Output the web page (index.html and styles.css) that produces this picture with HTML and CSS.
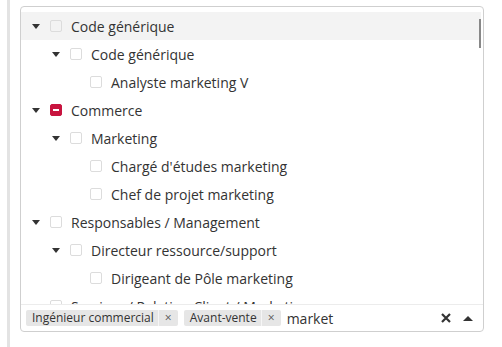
FILE: index.html
```html
<!DOCTYPE html>
<html lang="fr">
<head>
  <meta charset="UTF-8">
  <meta name="viewport" content="width=device-width, initial-scale=1">
  <title>Métiers</title>
  <link rel="stylesheet" href="styles.css">
</head>
<body>
  <div class="page">
    <div class="select">
      <div class="tree">
        <div class="row level-0 active"><span class="caret"></span><span class="box"></span><span class="label">Code générique</span></div>
        <div class="row level-1"><span class="caret"></span><span class="box"></span><span class="label">Code générique</span></div>
        <div class="row level-2"><span class="caret leaf"></span><span class="box"></span><span class="label">Analyste marketing V</span></div>
        <div class="row level-0"><span class="caret"></span><span class="box partial"></span><span class="label">Commerce</span></div>
        <div class="row level-1"><span class="caret"></span><span class="box"></span><span class="label">Marketing</span></div>
        <div class="row level-2"><span class="caret leaf"></span><span class="box"></span><span class="label">Chargé d'études marketing</span></div>
        <div class="row level-2"><span class="caret leaf"></span><span class="box"></span><span class="label">Chef de projet marketing</span></div>
        <div class="row level-0"><span class="caret"></span><span class="box"></span><span class="label">Responsables / Management</span></div>
        <div class="row level-1"><span class="caret"></span><span class="box"></span><span class="label">Directeur ressource/support</span></div>
        <div class="row level-2"><span class="caret leaf"></span><span class="box"></span><span class="label">Dirigeant de Pôle marketing</span></div>
        <div class="row level-0"><span class="caret"></span><span class="box"></span><span class="label">Services / Relation Client / Marketing</span></div>
        <div class="scroll-thumb"></div>
      </div>

      <div class="choices">
        <span class="tag"><span class="tag-text">Ingénieur commercial</span><span class="tag-x">×</span></span>
        <span class="tag"><span class="tag-text">Avant-vente</span><span class="tag-x">×</span></span>
        <input class="search" type="text" value="market">
        <span class="clear">
          <svg width="10" height="10" viewBox="0 0 10 10"><path d="M1 1 L9 9 M9 1 L1 9" stroke="#333" stroke-width="2.2"/></svg>
        </span>
        <span class="arrow-up"></span>
      </div>
    </div>
  </div>
</body>
</html>
```

FILE: styles.css
```css
* { box-sizing: border-box; }
body {
  margin: 0;
  font-family: "Open Sans", Arial, sans-serif;
  color: #333;
  background: white;
}
.page {
  margin-left: 7px;
  border-left: 3px solid #e3e3e3;
  padding: 6px 0 0 10px;
  height: 100vh;
}
.select {
  width: 464px;
  border: 1px solid #cfcfcf;
  border-radius: 4px;
  background: white;
}
.tree {
  position: relative;
  height: 297px;
  padding: 5px 2px 0 0;
  overflow: hidden;
}
.row {
  display: flex;
  align-items: center;
  height: 28px;
  font-size: 14px;
  white-space: nowrap;
}
.row.active { background: #f3f3f3; }
.level-0 { padding-left: 11px; }
.level-1 { padding-left: 31px; }
.level-2 { padding-left: 51px; }
.caret {
  width: 0;
  height: 0;
  border-left: 4px solid transparent;
  border-right: 4px solid transparent;
  border-top: 5px solid #333;
  margin-right: 10px;
}
.caret.leaf { visibility: hidden; }
.box {
  width: 12px;
  height: 12px;
  border: 1px solid #dcdcdc;
  border-radius: 2px;
  margin-right: 9px;
  flex-shrink: 0;
}
.box.partial {
  position: relative;
  background: #c8143f;
  border-color: #c8143f;
}
.box.partial::after {
  content: "";
  position: absolute;
  left: 2px;
  top: 4px;
  width: 6px;
  height: 2px;
  background: white;
}
.scroll-thumb {
  position: absolute;
  right: 2px;
  top: 12px;
  width: 2px;
  height: 29px;
  background: #888;
}
.choices {
  display: flex;
  align-items: center;
  height: 27px;
  border-top: 1px solid #ececec;
  padding: 0 10px 0 5px;
}
.tag {
  display: flex;
  align-items: stretch;
  height: 16px;
  background: #e6e6e6;
  border-radius: 2px;
  font-size: 12px;
  margin-right: 6px;
}
.tag-text {
  padding: 0 4px 0 6px;
  line-height: 16px;
  border-right: 1px solid #f6f6f6;
}
.tag-x {
  width: 19px;
  text-align: center;
  font-size: 12px;
  line-height: 16px;
  color: #555;
}
.search {
  flex: 1;
  border: none;
  outline: none;
  padding: 0;
  font-family: "Open Sans", Arial, sans-serif;
  font-size: 14px;
  color: #333;
  background: transparent;
  min-width: 0;
}
.clear {
  display: flex;
  margin-right: 12px;
}
.arrow-up {
  width: 0;
  height: 0;
  border-left: 5px solid transparent;
  border-right: 5px solid transparent;
  border-bottom: 5px solid #333;
}
```
